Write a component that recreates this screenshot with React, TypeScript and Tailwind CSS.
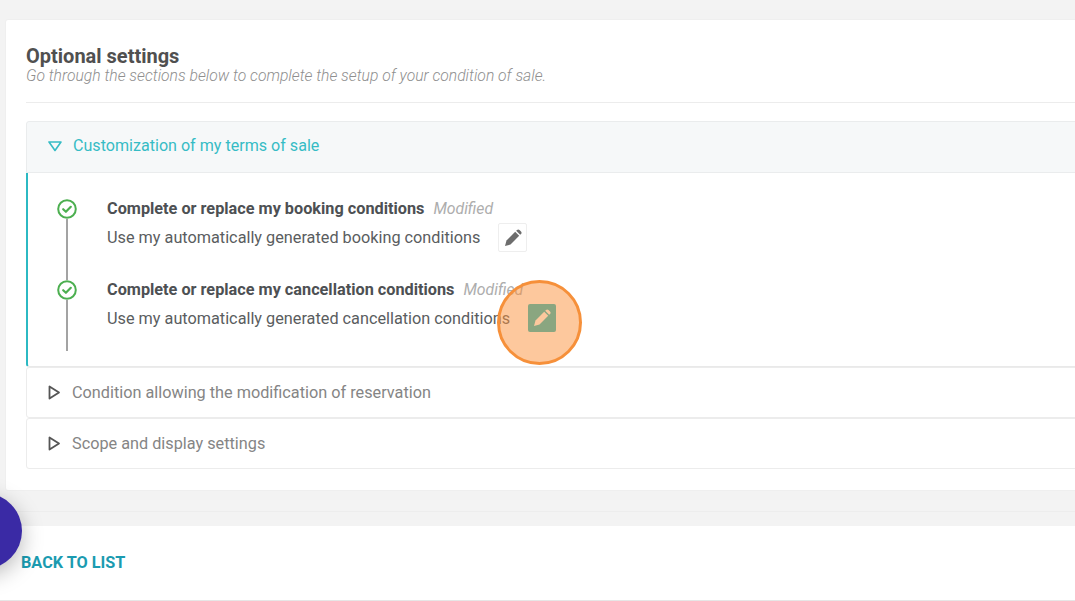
import React from "react";

function CheckDot() {
  return (
    <svg width="20" height="20" viewBox="0 0 20 20" fill="none" className="bg-white shrink-0">
      <circle cx="10" cy="10" r="8.8" stroke="#4caf50" strokeWidth="2" />
      <path d="M6.2 10.2l2.7 2.6 4.9-5" stroke="#4caf50" strokeWidth="2.2" strokeLinecap="round" strokeLinejoin="round" />
    </svg>
  );
}

function Pencil() {
  return (
    <svg width="18" height="18" viewBox="0 0 18 18" fill="currentColor">
      <path d="M1 17l1.5-5.5 8.7-8.7 4 4-8.7 8.7z" />
      <path d="M12.2 1.8l.8-.8a1.8 1.8 0 0 1 2.5 0l1.5 1.5a1.8 1.8 0 0 1 0 2.5l-.8.8z" />
    </svg>
  );
}

function Closed({ title }: { title: string }) {
  return (
    <div className="h-[51px] flex items-center pl-[21px] gap-[11px] bg-white border border-[#ececec] rounded-[3px] text-[16.25px] text-[#858585]">
      <svg width="13" height="15" viewBox="0 0 13 15" fill="none">
        <path d="M1.5 1.5v12l9.5-6z" stroke="#555" strokeWidth="1.8" strokeLinejoin="round" />
      </svg>
      <span className="pt-[2px]">{title}</span>
    </div>
  );
}

function Row({ title, label, button }: { title: string; label: string; button?: boolean }) {
  return (
    <div className={`flex ${button ? "h-[71px]" : "h-[81px]"}`}>
      <div className="w-[40px] ml-[19px] mr-[20px] flex flex-col items-center shrink-0">
        <CheckDot />
        <div className="w-[2px] flex-1 bg-[#a3a3a3]" />
      </div>
      <div>
        <div className="flex items-baseline h-[20px]">
          <b className="text-[16.25px] font-bold text-[#4d5053] leading-[20px]">{title}</b>
          <i className="ml-[9px] text-[15.8px] text-[#adadad] leading-[20px]">Modified</i>
        </div>
        <div className="flex items-center mt-[4px] text-[16.25px] text-[#5a5d60]">
          <span className="pt-[2px]">{label}</span>
          <span
            className={`ml-[18px] rounded-[2px] flex items-center justify-center ${
              button ? "w-[28px] h-[28px] bg-[#19bbc5] text-white" : "w-[29px] h-[29px] bg-white border border-[#eeeeee] text-[#6d6d6d]"
            }`}
          >
            <Pencil />
          </span>
        </div>
      </div>
    </div>
  );
}

export default function App() {
  return (
    <div className="relative h-[601px] w-[1075px] overflow-hidden bg-[#f3f3f3] font-['Roboto',sans-serif]">
      <div className="pt-[19px] pl-[5px]">
        <div className="w-[1100px] h-[472px] bg-white rounded-[3px] border border-[#efefef] px-[20px] pt-[26px]">
          <h2 className="text-[20px] font-bold leading-[21px] text-[#505050]">Optional settings</h2>
          <p className="text-[15.7px] font-light italic leading-[17px] text-[#8f8f8f]">
            Go through the sections below to complete the setup of your condition of sale.
          </p>
          <div className="h-px bg-[#ececec] mt-[18px] mb-[18px]" />
          <div className="h-[52px] flex items-center pl-[21px] pb-[2px] gap-[11px] bg-[#f6f8f9] border border-[#eaeced] rounded-t-[3px] text-[16.1px] text-[#36bcc5]">
            <svg width="14" height="11" viewBox="0 0 14 11" fill="none">
              <path d="M1 1h12L7 9.5z" stroke="#36bcc5" strokeWidth="1.6" strokeLinejoin="round" />
            </svg>
            <span>Customization of my terms of sale</span>
          </div>
          <div className="h-[194px] border-l-2 border-[#2cb9c3] border-b border-b-[#e9e9e9] rounded-bl-[3px] pt-[26px]">
            <Row title="Complete or replace my booking conditions" label="Use my automatically generated booking conditions" />
            <Row title="Complete or replace my cancellation conditions" label="Use my automatically generated cancellation conditions" button />
          </div>
          <Closed title="Condition allowing the modification of reservation" />
          <Closed title="Scope and display settings" />
        </div>
        <div className="h-[21px] border-b border-[#ededed]" />
      </div>
      <div className="mt-[14px] h-[75px] bg-white border-b border-[#e6e6e6] flex items-center pl-[21px]">
        <span className="text-[16.25px] font-bold text-[#1b9bb0]">BACK TO LIST</span>
      </div>
      <div className="absolute left-[-54px] top-[493px] w-[76px] h-[76px] rounded-full bg-[#3a2aa5] shadow-[0_6px_22px_rgba(0,0,0,0.28)]" />
      <div className="absolute left-[497px] top-[280px] w-[85px] h-[85px] rounded-full bg-[#fb913b]/50 border-[3px] border-[#f6903a]" />
    </div>
  );
}
